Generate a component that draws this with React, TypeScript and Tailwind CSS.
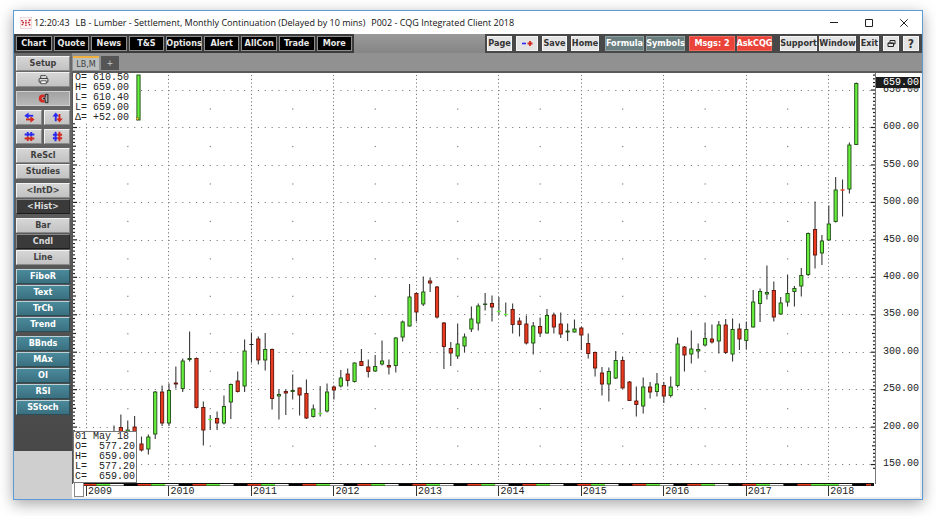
import { ReactNode } from "react";
import clsx from "clsx";

type Kind = "g" | "r" | "k";
type Candle = [number, number, number, number, Kind];

// high, body top, body bottom, low (chart units), from May 2009 on
const candles: Candle[] = [
  [425.5, 433, 445, 450, "r"],
  [414.5, 427.5, 440, 445, "r"],
  [420.5, 430, 440, 445, "g"],
  [416, 427, 440, 445, "r"],
  [436.5, 444, 450, 451.5, "r"],
  [434.5, 437, 449, 454.5, "g"],
  [391, 392, 434, 439, "g"],
  [385.5, 392, 423, 426, "r"],
  [383.5, 390.5, 423, 426, "g"],
  [366.5, 383, 384, 388.5, "r"],
  [358.5, 361, 388.5, 392, "g"],
  [331.5, 358.5, 359.5, 361.5, "g"],
  [357.5, 358.5, 407.5, 408.5, "r"],
  [401.5, 407.5, 430, 445.5, "r"],
  [415, 419.5, 419.5, 430, "g"],
  [411.5, 418.5, 423, 430, "r"],
  [395.5, 406.5, 423, 424.5, "g"],
  [383.5, 384.5, 402, 419, "g"],
  [371.5, 381, 391.5, 392.5, "r"],
  [339.5, 351, 386, 392, "g"],
  [332.5, 344.5, 344.5, 362.5, "k"],
  [336.5, 339, 360, 364.5, "r"],
  [333, 349.5, 360, 370.5, "g"],
  [348.5, 349.5, 398.5, 409.5, "r"],
  [389.5, 394.5, 396, 419.5, "g"],
  [389.5, 391.5, 393, 415, "r"],
  [374.5, 390.5, 391.5, 399.5, "g"],
  [387.5, 388, 395, 415.5, "r"],
  [379.5, 393.5, 418, 419, "r"],
  [404.5, 409, 416.5, 417.5, "g"],
  [386, 413.5, 413.5, 416.5, "g"],
  [383.5, 392, 411, 412.5, "g"],
  [385.5, 387, 390, 399.5, "r"],
  [370, 378, 386, 387.5, "g"],
  [368.5, 374, 380.5, 386.5, "r"],
  [362.5, 363, 381.5, 382.5, "g"],
  [349, 361.5, 365.5, 366, "r"],
  [359.5, 367, 371.5, 377.5, "r"],
  [355, 366.5, 371, 371.5, "g"],
  [340.5, 361, 364, 365.5, "g"],
  [359.5, 365.5, 367, 374.5, "r"],
  [337, 338, 365.5, 372.5, "g"],
  [320.5, 322, 337, 341.5, "g"],
  [284, 297, 326, 326.5, "g"],
  [292.5, 293.5, 312, 321.5, "r"],
  [276.5, 292, 304, 306, "g"],
  [278, 281, 283, 292, "r"],
  [286, 287, 317, 318.5, "r"],
  [322, 323, 346.5, 369, "r"],
  [342, 348.5, 353, 366, "r"],
  [323.5, 344, 356, 359, "g"],
  [333.5, 337, 346, 352, "g"],
  [306.5, 319, 329, 332, "g"],
  [303.5, 306, 323, 330.5, "g"],
  [293, 304, 304.5, 310.5, "g"],
  [295.5, 303.5, 307, 321.5, "r"],
  [297, 311.5, 311.5, 314.5, "g"],
  [302.5, 314.5, 314.5, 316.5, "g"],
  [303.5, 309.5, 324.5, 333.5, "r"],
  [317.5, 321, 324.5, 336.5, "r"],
  [315.5, 324, 343, 344.5, "r"],
  [322, 326, 343, 354.5, "g"],
  [317.5, 326.5, 333, 337, "r"],
  [309, 315.5, 333, 333.5, "g"],
  [312.5, 315, 327, 333.5, "r"],
  [312.5, 324, 334, 338, "r"],
  [323.5, 331, 332, 341, "g"],
  [319.5, 329, 332, 332.5, "g"],
  [327, 328, 335, 350, "r"],
  [333.5, 343.5, 353.5, 358.5, "r"],
  [351.5, 352.5, 368, 376.5, "r"],
  [367, 373, 384, 395.5, "r"],
  [367.5, 371.5, 384, 401.5, "g"],
  [351, 360.5, 378, 379, "g"],
  [356.5, 360.5, 388, 388.5, "r"],
  [381, 382, 400.5, 401, "r"],
  [386.5, 401, 404.5, 416.5, "r"],
  [377.5, 387, 406, 413.5, "g"],
  [382, 387, 392, 398.5, "r"],
  [373, 384, 391.5, 396.5, "g"],
  [382, 385.5, 396, 403, "r"],
  [376.5, 387, 395.5, 397.5, "g"],
  [337.5, 344, 385.5, 387.5, "g"],
  [346, 347, 355, 371.5, "r"],
  [330.5, 349, 354, 363.5, "g"],
  [343.5, 349.5, 351, 358.5, "g"],
  [322.5, 338.5, 345, 346.5, "g"],
  [324.5, 339, 342, 343.5, "r"],
  [321, 325, 341, 353.5, "g"],
  [319, 325, 352.5, 354, "r"],
  [318.5, 329.5, 354, 361.5, "g"],
  [323.5, 329, 339, 350, "r"],
  [321.5, 329.5, 340.5, 349.5, "g"],
  [290, 302, 327, 327.5, "g"],
  [288.5, 291.5, 303.5, 322, "g"],
  [265.5, 292.5, 294, 299.5, "g"],
  [281.5, 290.5, 317, 321.5, "r"],
  [297, 303, 314, 314.5, "g"],
  [274.5, 293.5, 302, 306.5, "g"],
  [286, 288.5, 291.5, 306.5, "g"],
  [268, 275.5, 286, 296.5, "g"],
  [232.5, 233.5, 274.5, 276, "g"],
  [201.5, 229.5, 255, 268.5, "r"],
  [235, 241, 253, 265, "g"],
  [205.5, 224, 240, 240.5, "g"],
  [177, 190, 221.5, 222.5, "g"],
  [179.5, 190, 190, 216.5, "r"],
  [142.5, 145, 189, 193.5, "g"],
  [82.5, 83.5, 144.5, 145, "g"],
];

const FIRST = 4;
const LEFT = 86;
const MONTH = 6.873;
const fills = { g: "#66ee3c", r: "#ea3a20", k: "#222222" };
const years = [2009, 2010, 2011, 2012, 2013, 2014, 2015, 2016, 2017, 2018];
const prices = [600, 550, 500, 450, 400, 350, 300, 250, 200, 150];

const monthX = (i: number) => LEFT + i * MONTH;
const priceY = (p: number) => 127.2 + (600 - p) * 0.749;

// two-month colour bands under the chart
const bandColors = [fills.g, "#ffffff", "#000000", fills.r];
const bands = Array.from({ length: 57 }, (_, k) => ({
  x: monthX(1.5 + k * 2),
  w: k === 56 ? MONTH - 2 : MONTH * 2,
  fill: k < 53 ? bandColors[k % 4] : bandColors[(k - 1) % 4],
}));

function Chart() {
  const minor = Array.from({ length: 106 }, (_, k) => 145 + k * 5);
  return (
    <svg
      viewBox="72 73 850 426"
      className="block h-auto w-full font-['Liberation_Mono',monospace] text-[10px]"
      role="img"
      aria-label="Lumber monthly candles"
    >
      <rect x="72" y="73" width="850" height="426" fill="#fff" />
      <rect x="920" y="73" width="2" height="426" fill="#ececec" />
      <rect x="72" y="497" width="850" height="2" fill="#ececec" />

      {years.map((year, n) => (
        <line
          key={year}
          x1={Math.round(monthX(n * 12)) + 0.5}
          x2={Math.round(monthX(n * 12)) + 0.5}
          y1="75"
          y2="480"
          stroke="#777"
          strokeDasharray="1.2 2.545"
        />
      ))}
      {[650, ...prices].map((p) => (
        <g key={p}>
          <line
            x1={LEFT - MONTH}
            x2="874"
            y1={Math.round(priceY(p)) + 0.5}
            y2={Math.round(priceY(p)) + 0.5}
            stroke="#808080"
            strokeDasharray={`1.2 ${MONTH - 1.2}`}
          />
          {years.slice(0, 9).map((year, n) => (
            <rect
              key={year}
              x={monthX(n * 12 + 6)}
              y={priceY(p - 25)}
              width="1.2"
              height="1.2"
              fill={p === 150 ? "none" : "#808080"}
            />
          ))}
        </g>
      ))}

      {/* price axes */}
      <line x1="72.5" x2="72.5" y1="73" y2="484" stroke="#555" />
      <line x1="875.5" x2="875.5" y1="73" y2="484" stroke="#777" />
      {minor.map((p) => {
        if (p > 670) return null;
        const len = p % 50 === 0 ? 4 : p % 25 === 0 ? 3 : 2;
        const y = priceY(p) - 0.3;
        return (
          <g key={p} fill="#222">
            <rect x="73" y={y} width={len} height="1.2" />
            <rect x={875 - len} y={y} width={len} height="1.2" />
          </g>
        );
      })}

      {candles.map(([high, top, bottom, low, kind], n) => {
        const x = monthX(FIRST + n) + 0.5;
        return (
          <g key={n}>
            <line x1={x} x2={x} y1={high} y2={low} stroke="#3a3a3a" strokeWidth="1.1" />
            {top === bottom ? (
              <line
                x1={x - 2}
                x2={x + 2}
                y1={top}
                y2={top}
                stroke={fills[kind]}
                strokeWidth={kind === "k" ? 1 : 1.4}
              />
            ) : (
              <rect
                x={x - 1.6}
                y={top}
                width="3.2"
                height={bottom - top}
                fill={fills[kind]}
                stroke={kind === "r" ? "#5a140a" : "#1f4a14"}
                strokeWidth=".9"
              />
            )}
          </g>
        );
      })}

      {/* time axis */}
      <rect x="83" y="483" width="791" height="3" fill="#111" />
      <rect x="83" y="484" width={monthX(1.5) - 83} height="1.5" fill={fills.r} />
      {bands.map((b) => (
        <rect key={b.x} x={b.x} y="484" width={b.w} height="1.5" fill={b.fill} />
      ))}
      <rect x="74.5" y="482.5" width="9" height="14" fill="#fff" stroke="#888" />
      {years.map((year, n) => (
        <g key={year}>
          <line
            x1={Math.round(monthX(n * 12)) + 0.5}
            x2={Math.round(monthX(n * 12)) + 0.5}
            y1="486"
            y2="496"
            stroke="#333"
          />
          <text x={monthX(n * 12) + 2} y="494" fill="#222">
            {year}
          </text>
        </g>
      ))}

      {[650, ...prices].map((p) => (
        <text key={p} x="883" y={Math.round(priceY(p)) + 2} fill="#222">
          {p}.00
        </text>
      ))}
      <rect x="876" y="77" width="44" height="11" fill="#1c1c1c" />
      <text x="883" y="85" fill="#fff">
        659.00
      </text>
    </svg>
  );
}

const tones = {
  light:
    "bg-gradient-to-b from-[#d6d6d6] to-[#c2c2c2] text-[#3f3f3f] border-t-[#f2f2f2] border-l-[#f2f2f2] border-b-[#8a8a8a] border-r-[#8a8a8a]",
  mid: "bg-gradient-to-b from-[#a2a2a2] to-[#b8b8b8] text-[#3f3f3f] border-t-[#d0d0d0] border-l-[#d0d0d0] border-b-[#cfcfcf] border-r-[#cfcfcf]",
  dark: "bg-[#3a3a3a] text-[#dcdcdc] border-t-[#8a8a8a] border-l-[#8a8a8a] border-b-[#1c1c1c] border-r-[#2a2a2a]",
  teal: "bg-gradient-to-b from-[#4a8a9b] to-[#3a7080] text-white border-t-[#bcd0d6] border-l-[#bcd0d6] border-b-[#2b4d57] border-r-[#2b4d57]",
};

function SideButton({
  tone = "light",
  label,
  children,
}: {
  tone?: keyof typeof tones;
  label?: string;
  children: ReactNode;
}) {
  return (
    <button
      aria-label={label}
      className={clsx(
        "flex h-[15px] w-full items-center justify-center border text-[9px] leading-none font-bold",
        tones[tone],
      )}
    >
      {children}
    </button>
  );
}

function Group({ children }: { children: ReactNode }) {
  return <div className="flex flex-col gap-px">{children}</div>;
}

const BLUE = "#2a2af0";
const RED = "#d22a20";

function Icon({ children }: { children: ReactNode }) {
  return (
    <svg viewBox="0 0 10 10" className="size-[11px]" fill="none" aria-hidden="true">
      {children}
    </svg>
  );
}

function PrinterIcon() {
  return (
    <Icon>
      <path d="M2.5 4V1.5h4.5l1 1V4" fill="#eee" stroke="#444" strokeWidth=".9" />
      <rect x="1" y="4" width="8" height="3.6" rx=".8" fill="#ddd" stroke="#333" strokeWidth=".9" />
      <path d="M2.5 6.2h5v2.6h-5z" fill="#fff" stroke="#444" strokeWidth=".8" />
    </Icon>
  );
}

function MagnetIcon() {
  return (
    <Icon>
      <path d="M6 2.6H4.4a2.4 2.4 0 0 0 0 4.8H6" stroke={RED} strokeWidth="2.6" />
      <path d="M4.6 5H6.6" stroke="#222" strokeWidth="1" />
      <path d="M6.6 1.2v2.6L5.6 5l1 1.2v2.6M9 1v8M6.6 1.2H9M6.6 8.8H9" stroke="#222" strokeWidth=".9" />
    </Icon>
  );
}

function SwapIcon() {
  return (
    <Icon>
      <path d="M1.5 3.4H8.4" stroke={BLUE} strokeWidth="1.7" />
      <path d="M4.2.4v6L.4 3.4z" fill={BLUE} />
      <path d="M1.8 6.8h6" stroke={RED} strokeWidth="1.7" />
      <path d="M5.8 3.8v6l3.8-3z" fill={RED} />
    </Icon>
  );
}

function SqueezeIcon() {
  return (
    <Icon>
      <path d="M.6 3.2h8.8M3.4.8v4.2M6.6.8v4.2" stroke={BLUE} strokeWidth="1.7" />
      <path d="M.6 6.8h8.8M3.4 5v4.2M6.6 5v4.2" stroke={RED} strokeWidth="1.7" />
    </Icon>
  );
}

function Sidebar() {
  return (
    <aside className="w-[58px] shrink-0 bg-[#cfcfcf]">
      <div className="flex flex-col gap-1 bg-gradient-to-b from-[#6a6a6a] to-[#484848] px-0.5 pt-[3px] pb-9">
        <Group>
          <SideButton>Setup</SideButton>
          <SideButton label="Print">
            <PrinterIcon />
          </SideButton>
        </Group>
        <SideButton tone="mid" label="Snap">
          <MagnetIcon />
        </SideButton>
        <div className="flex gap-0.5">
          <SideButton label="Scroll">
            <SwapIcon />
          </SideButton>
          <SideButton label="Scroll vertically">
            <span className="rotate-90 -scale-y-100">
              <SwapIcon />
            </span>
          </SideButton>
        </div>
        <div className="flex gap-0.5">
          <SideButton label="Squeeze">
            <SqueezeIcon />
          </SideButton>
          <SideButton label="Squeeze vertically">
            <span className="-rotate-90">
              <SqueezeIcon />
            </span>
          </SideButton>
        </div>
        <Group>
          <SideButton>ReScl</SideButton>
          <SideButton>Studies</SideButton>
        </Group>
        <Group>
          <SideButton>&lt;IntD&gt;</SideButton>
          <SideButton tone="dark">&lt;Hist&gt;</SideButton>
        </Group>
        <Group>
          <SideButton>Bar</SideButton>
          <SideButton tone="dark">Cndl</SideButton>
          <SideButton>Line</SideButton>
        </Group>
        <Group>
          {["FiboR", "Text", "TrCh", "Trend"].map((name) => (
            <SideButton key={name} tone="teal">
              {name}
            </SideButton>
          ))}
        </Group>
        <Group>
          {["BBnds", "MAx", "OI", "RSI", "SStoch"].map((name) => (
            <SideButton key={name} tone="teal">
              {name}
            </SideButton>
          ))}
        </Group>
      </div>
    </aside>
  );
}

const barTones = {
  light: "bg-[#e4e4e4] text-[#333] border-[#f6f6f6]",
  slate: "bg-[#6b7f80] text-white border-[#8fa0a0]",
  red: "bg-[#e9433a] text-white border-[#f06a60]",
};

function BarButton({
  tone = "light",
  width,
  label,
  children,
}: {
  tone?: keyof typeof barTones;
  width: string;
  label?: string;
  children: ReactNode;
}) {
  return (
    <button
      aria-label={label}
      className={clsx(
        "flex h-[15px] items-center justify-center border whitespace-nowrap text-[9px] leading-none font-bold",
        width,
        barTones[tone],
      )}
    >
      {children}
    </button>
  );
}

function Toolbar() {
  const modules = ["Chart", "Quote", "News", "T&S", "Options", "Alert", "AllCon", "Trade", "More"];
  return (
    <div className="flex h-[19px] justify-between bg-gradient-to-b from-[#9a9a9a] to-[#858585]">
      <nav className="flex w-[340px] items-center gap-0.5 bg-[#3c3c3c] px-0.5">
        {modules.map((name) => (
          <button
            key={name}
            className="flex h-[15px] min-w-0 flex-1 items-center justify-center border border-[#8c8c8c] bg-black text-[9px] leading-none font-bold whitespace-nowrap text-[#e8e8e8]"
          >
            {name}
          </button>
        ))}
      </nav>
      <div className="flex items-center gap-1 bg-[#484848] pr-[3px] pl-0.5">
        <BarButton width="w-[25px]">Page</BarButton>
        <BarButton width="w-[22px]" label="Zoom">
          <svg viewBox="0 0 12 8" className="h-2 w-3" aria-hidden="true">
            <path d="M1 3.5h4" stroke={BLUE} strokeWidth="1.6" />
            <path d="M6.5 3.5h5M9 1v5" stroke={RED} strokeWidth="1.8" />
          </svg>
        </BarButton>
        <BarButton width="w-[25px]">Save</BarButton>
        <BarButton width="w-[28px]">Home</BarButton>
        <div className="flex gap-0.5 pl-0.5">
          <BarButton width="w-[39px]" tone="slate">
            Formula
          </BarButton>
          <BarButton width="w-[39px]" tone="slate">
            Symbols
          </BarButton>
        </div>
        <div className="flex gap-0.5">
          <BarButton width="w-[46px]" tone="red">
            Msgs: 2
          </BarButton>
          <BarButton width="w-[35px]" tone="red">
            AskCQG
          </BarButton>
        </div>
        <div className="flex gap-0.5 pl-1">
          <BarButton width="w-[37px]">Support</BarButton>
          <BarButton width="w-[37px]">Window</BarButton>
        </div>
        <BarButton width="w-[19px]">Exit</BarButton>
        <BarButton width="w-4" label="Restore">
          <svg viewBox="0 0 9 9" className="size-[9px]" fill="none" stroke="#222" aria-hidden="true">
            <path d="M3 3.5V1.5h5v3.5H6.5M3 1.5h5" />
            <path d="M1 4h5.5v3.5H1zM1 4.3h5.5" />
          </svg>
        </BarButton>
        <BarButton width="w-4">
          <span className="text-xs leading-none">?</span>
        </BarButton>
      </div>
    </div>
  );
}

function TitleBar() {
  return (
    <header className="flex h-[23px] items-center bg-white pl-1.5 font-['Open_Sans','Noto_Sans',sans-serif] text-[9px] text-[#111]">
      <svg viewBox="0 0 12 12" className="size-3" aria-hidden="true">
        <rect x=".3" y=".3" width="11.4" height="11.4" fill="#fdf5f5" stroke="#e6cccc" strokeWidth=".6" />
        <g fill="#c8202c">
          <rect x="1.2" y="3" width="1.6" height="1.4" />
          <rect x="2.2" y="4.8" width="1.8" height="1.6" />
          <rect x="1.6" y="7" width="1.6" height="1.2" />
          <rect x="5.2" y="3" width="1.4" height="1.4" />
          <rect x="5" y="5.2" width="1.8" height="1.4" />
          <rect x="5.2" y="7.6" width="1.4" height="1.4" />
          <rect x="8.8" y="2.4" width="1.8" height="1.6" />
          <rect x="7.8" y="4.8" width="1.8" height="1.5" />
          <rect x="8.8" y="7" width="1.6" height="1.4" />
        </g>
      </svg>
      <time className="pl-0.5">12:20:43</time>
      <h1 className="pl-1.5">LB - Lumber - Settlement, Monthly Continuation (Delayed by 10 mins)</h1>
      <p className="pl-1.5">P002 - CQG Integrated Client 2018</p>
      <div className="ml-auto flex items-center gap-[27px] pr-[14px]">
        <button aria-label="Minimize">
          <svg viewBox="0 0 8 8" className="size-2" stroke="#222">
            <path d="M0 3.5h8" />
          </svg>
        </button>
        <button aria-label="Maximize">
          <svg viewBox="0 0 8 8" className="size-2" stroke="#222" fill="none">
            <path d="M.5.5h7v7h-7z" />
          </svg>
        </button>
        <button aria-label="Close">
          <svg viewBox="0 0 8 8" className="size-2" stroke="#222">
            <path d="M.3.3l7.4 7.4M7.7.3L.3 7.7" />
          </svg>
        </button>
      </div>
    </header>
  );
}

const quote = ["O= 610.50", "H= 659.00", "L= 610.40", "L= 659.00", "Δ= +52.00"];
const cursor = ["01 May 18", "O=  577.20", "H=  659.00", "L=  577.20", "C=  659.00"];

export default function App() {
  return (
    <main className="bg-white px-[13px] pt-[10px] pb-4 font-['DejaVu_Sans_Condensed','DejaVu_Sans',sans-serif]">
      <div className="border border-[#5a9bd8] shadow-[0_4px_14px_rgba(0,0,0,0.35)]">
        <TitleBar />
        <Toolbar />
        <div className="flex">
          <Sidebar />
          <section className="min-w-0 flex-1">
            <div className="flex h-5 items-end gap-0.5 border-b-2 border-[#5a5a5a] bg-[#919191] pb-px pl-px text-[9px] leading-none">
              <button className="h-[14px] w-[26px] border-t-2 border-[#f0b040] bg-[#bcc0c0] text-[#444]">
                LB,M
              </button>
              <button aria-label="Add page" className="h-[14px] w-[18px] bg-[#555] text-[#ccc]">
                +
              </button>
            </div>
            <div className="relative font-['Liberation_Mono',monospace] text-[10px] leading-[10px] text-[#222]">
              <Chart />
              <div className="absolute top-0 left-px flex bg-white">
                <div className="w-[63px] pl-0.5 whitespace-pre">
                  {quote.map((line, n) => (
                    <p key={n}>{line}</p>
                  ))}
                </div>
                <svg viewBox="0 0 5 50" className="h-[50px] w-[5px]" aria-hidden="true">
                  <rect x=".9" y="2" width="3.2" height="45" fill={fills.g} stroke="#1f4a14" strokeWidth=".9" />
                  <circle cx="1.4" cy="45.6" r="1.4" fill="#f0d020" stroke="#333" strokeWidth=".5" />
                </svg>
              </div>
              <div className="absolute bottom-4 left-px w-[64px] border border-[#777] bg-white pl-px whitespace-pre">
                {cursor.map((line, n) => (
                  <p key={n}>{line}</p>
                ))}
              </div>
            </div>
          </section>
        </div>
      </div>
    </main>
  );
}
